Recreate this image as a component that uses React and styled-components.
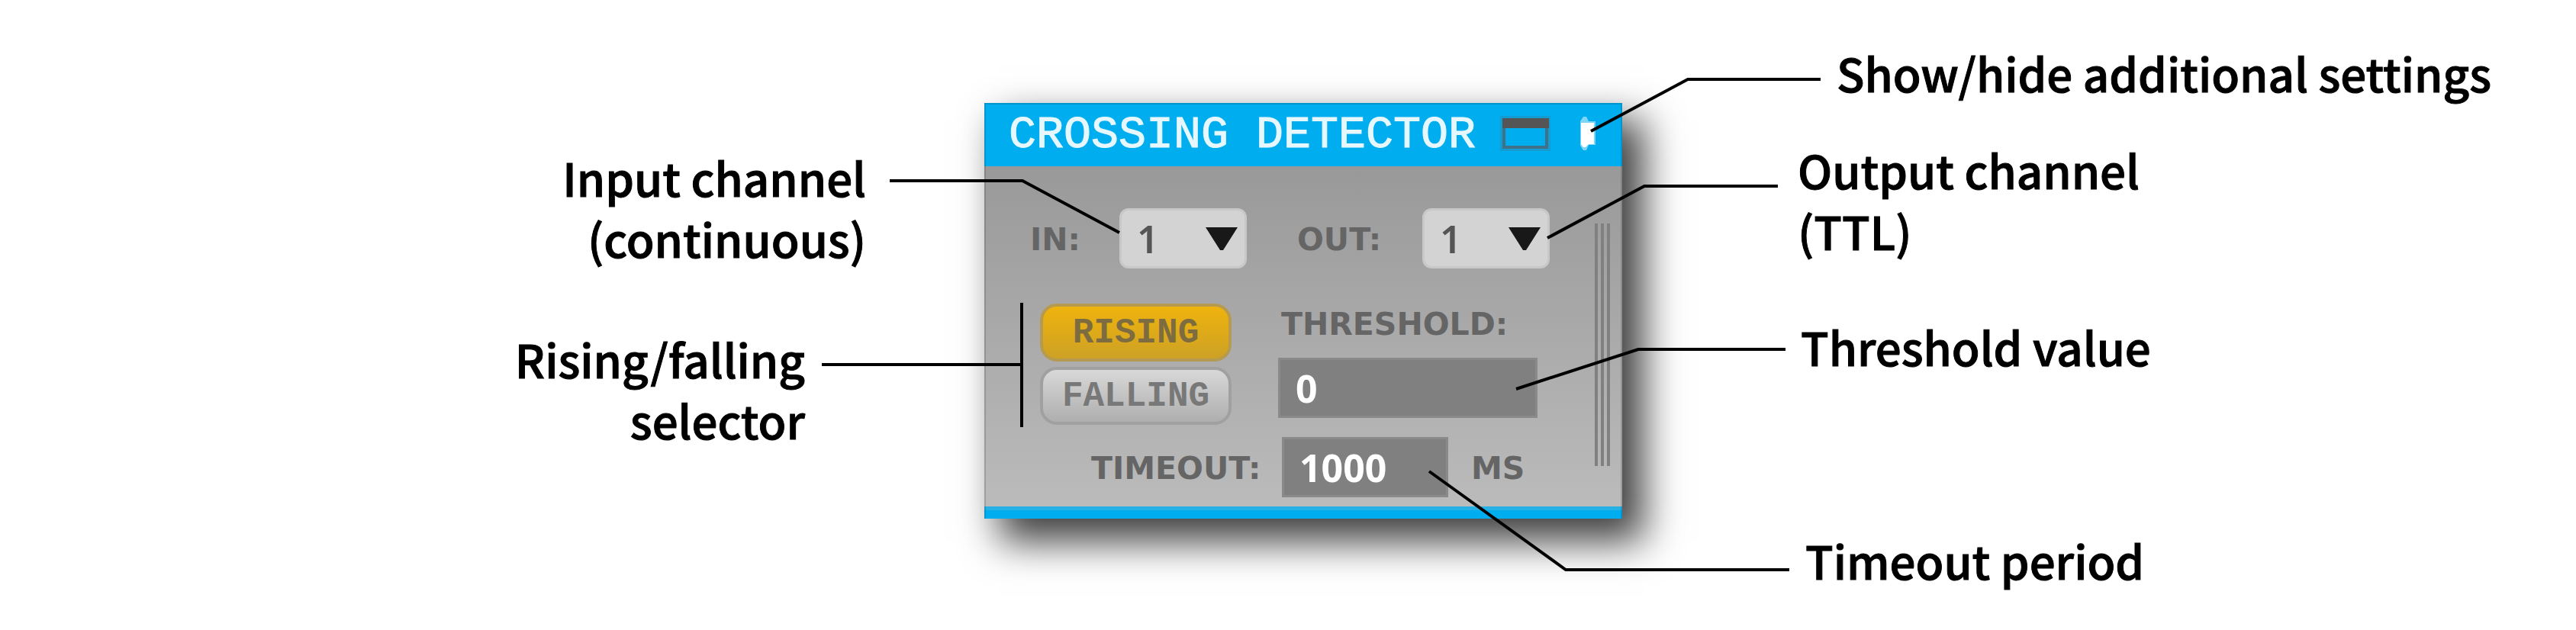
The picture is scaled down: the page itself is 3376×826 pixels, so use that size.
import React, { useState } from "react";
import styled, { createGlobalStyle } from "styled-components";

const GlobalStyle = createGlobalStyle`
  *, *::before, *::after { box-sizing: border-box; }
  body { margin: 0; background: #fff; color: #000; }
  button, input, select { font: inherit; color: inherit; margin: 0; }
`;

const Figure = styled.main`
  display: grid;
  grid-template-columns: minmax(620px, 1290fr) auto minmax(1140px, 1250fr);
  align-items: start;
  padding-bottom: 50px;
`;

const Callouts = styled.div`
  display: flex;
  flex-direction: column;
  align-items: ${(p) => (p.$side === "left" ? "flex-end" : "flex-start")};
  text-align: ${(p) => (p.$side === "left" ? "right" : "left")};
  padding-top: ${(p) => p.$top}px;
`;

const Callout = styled.p`
  margin: ${(p) => p.$gap || 0}px ${(p) => p.$right || 0}px 0 ${(p) => p.$left || 0}px;
  font: 500 60px/80px "Noto Sans CJK JP", "Noto Sans", sans-serif;
  -webkit-text-stroke: 1px #000;
  white-space: nowrap;
`;

const Panel = styled.section`
  position: relative;
  width: 836px;
  margin-top: 135px;
  background: #00aeef;
  box-shadow: 24px 26px 48px 4px rgba(0, 0, 0, 0.75);

  &::after {
    content: "";
    position: absolute;
    inset: 0;
    border: 2px solid rgba(0, 0, 0, 0.14);
    border-bottom: 0;
    pointer-events: none;
  }
`;

const TitleBar = styled.header`
  display: flex;
  align-items: center;
  height: 83px;
  padding: 0 34px 3px 32px;
`;

const Title = styled.h1`
  flex: 1;
  margin: 0;
  padding-top: 4px;
  color: #e6f7fe;
  font: 400 60px/76px "Liberation Mono", monospace;
  -webkit-text-stroke: 1px #e6f7fe;
  white-space: nowrap;
`;

const IconButton = styled.button`
  display: flex;
  padding: 0;
  margin-left: ${(p) => p.$gap}px;
  border: 0;
  background: none;
`;

const Body = styled.div`
  display: flex;
  justify-content: space-between;
  margin-bottom: 16px;
  padding: 55px 15px 12px 60px;
  background: linear-gradient(#999, #bbb);
  box-shadow: 0 5px 0 #27b0e4;
`;

const Controls = styled.form`
  display: flex;
  flex-direction: column;
`;

const ChannelRow = styled.div`
  display: grid;
  grid-template-columns: 117px 167px 66px 164px 167px;
  align-items: center;
  margin-bottom: 46px;
`;

const Label = styled.label`
  padding-top: 3px;
  color: #656565;
  font: 700 41px/48px "DejaVu Sans", sans-serif;
  white-space: nowrap;
`;

const Unit = styled(Label).attrs({ as: "span" })``;

const OutLabel = styled(Label)`
  grid-column: 4;
`;

const SelectBox = styled.div`
  display: grid;
  align-items: center;

  > * { grid-area: 1 / 1; }
  > svg { justify-self: end; margin-right: 12px; pointer-events: none; }
`;

const Select = styled.select`
  appearance: none;
  width: 100%;
  height: 79px;
  padding: 0 20px;
  border: 3px solid #c8c8c8;
  border-radius: 12px;
  background: #d3d3d3;
  color: #555;
  font: 600 50px/70px "Noto Sans", sans-serif;
`;

const EdgeRow = styled.div`
  display: flex;
  gap: 61px;
  margin: 0 0 16px 13px;
`;

const EdgeButtons = styled.div`
  display: flex;
  flex-direction: column;
  gap: 7px;
`;

const EdgeButton = styled.button`
  width: 251px;
  height: 76px;
  padding: 2px 0 0;
  border: 4px solid ${(p) => (p.$active ? "#b59a50" : "#a0a0a0")};
  border-radius: 22px;
  background: ${(p) =>
    p.$active
      ? "linear-gradient(#efb30d, #cda125)"
      : "linear-gradient(#d8d8d8, #aeaeae)"};
  color: ${(p) => (p.$active ? "#7e6c41" : "#787878")};
  font: 700 46px/60px "Liberation Mono", monospace;
`;

const Field = styled.div`
  display: flex;
  flex-direction: column;
  gap: 20px;

  > label { margin-left: 4px; }
`;

const NumberBox = styled.input`
  width: ${(p) => p.$width}px;
  height: 79px;
  padding: 0 20px;
  border: 3px solid #8a8a8a;
  border-radius: 0;
  background: #808080;
  color: #fff;
  font: 700 50px/60px "Noto Sans", sans-serif;
`;

const TimeoutRow = styled.div`
  display: grid;
  grid-template-columns: 250px 218px auto;
  align-items: center;
  margin-left: 80px;

  > :last-child { margin-left: 30px; }
`;

const Grip = styled.div`
  width: 21px;
  height: 318px;
  margin-top: 20px;
  background: repeating-linear-gradient(
    90deg,
    #808080 0 4px,
    transparent 4px 8px
  );
`;

const Leaders = styled.svg`
  position: absolute;
  top: 0;
  left: 0;
  z-index: 1;
  overflow: visible;
  pointer-events: none;
`;

function ChannelSelect({ id }) {
  return (
    <SelectBox>
      <Select id={id} defaultValue="1">
        <option>1</option>
        <option>2</option>
      </Select>
      <svg width="42" height="30" viewBox="0 0 42 30" aria-hidden="true">
        <path d="M0 0H42L23 30H19Z" fill="#181818" />
      </svg>
    </SelectBox>
  );
}

export default function App() {
  const [edge, setEdge] = useState("rising");

  return (
    <>
      <GlobalStyle />
      <Figure>
        <Callouts $side="left" $top={192}>
          <Callout $right={155}>
            Input channel
            <br />
            (continuous)
          </Callout>
          <Callout $right={235} $gap={78}>
            Rising/falling
            <br />
            selector
          </Callout>
        </Callouts>

        <Panel>
          <TitleBar>
            <Title>CROSSING DETECTOR</Title>
            <IconButton type="button" aria-label="Open window">
              <svg width="66" height="46" viewBox="0 0 66 46">
                <rect width="66" height="46" fill="#149bd2" />
                <rect x="5" y="12" width="56" height="29" fill="#00aeef" stroke="#3f7288" strokeWidth="4" />
                <rect x="3" y="3" width="61" height="13" fill="#555" />
              </svg>
            </IconButton>
            <IconButton type="button" aria-label="Show or hide settings" $gap={38}>
              <svg width="22" height="46" viewBox="0 0 22 46">
                <path d="M1 7L5 1H9L12 7H21V38H12L9 45H5L1 39Z" fill="#7fd5f7" />
                <path d="M2 9H19V37H12L8 41H5L2 37Z" fill="#fff" />
              </svg>
            </IconButton>
          </TitleBar>

          <Body>
            <Controls onSubmit={(e) => e.preventDefault()}>
              <ChannelRow>
                <Label htmlFor="in">IN:</Label>
                <ChannelSelect id="in" />
                <OutLabel htmlFor="out">OUT:</OutLabel>
                <ChannelSelect id="out" />
              </ChannelRow>

              <EdgeRow>
                <EdgeButtons>
                  <EdgeButton type="button" $active={edge === "rising"} onClick={() => setEdge("rising")}>
                    RISING
                  </EdgeButton>
                  <EdgeButton type="button" $active={edge === "falling"} onClick={() => setEdge("falling")}>
                    FALLING
                  </EdgeButton>
                </EdgeButtons>
                <Field>
                  <Label htmlFor="threshold">THRESHOLD:</Label>
                  <NumberBox id="threshold" $width={340} defaultValue="0" />
                </Field>
              </EdgeRow>

              <TimeoutRow>
                <Label htmlFor="timeout">TIMEOUT:</Label>
                <NumberBox id="timeout" $width={218} defaultValue="1000" />
                <Unit>MS</Unit>
              </TimeoutRow>
            </Controls>
            <Grip />
          </Body>

          <Leaders width="836" height="546" fill="none" stroke="#000" strokeWidth="4" aria-hidden="true">
            <path d="M-124 102H50L177 170" />
            <path d="M-213 343H49M49 262V425" />
            <path d="M1096 -31H922L795 37" />
            <path d="M1040 109H865L738 177" />
            <path d="M1050 323H857L697 375" />
            <path d="M1055 612H762L583 483" />
          </Leaders>
        </Panel>

        <Callouts $side="right" $top={55}>
          <Callout $left={281}>Show/hide additional settings</Callout>
          <Callout $left={230} $gap={47}>
            Output channel
            <br />
            (TTL)
          </Callout>
          <Callout $left={234} $gap={72}>Threshold value</Callout>
          <Callout $left={240} $gap={200}>Timeout period</Callout>
        </Callouts>
      </Figure>
    </>
  );
}
